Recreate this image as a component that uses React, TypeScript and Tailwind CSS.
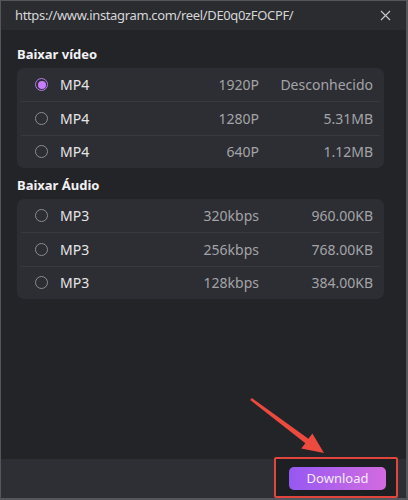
const video = [
  { fmt: "MP4", q: "1920P", size: "Desconhecido", on: true },
  { fmt: "MP4", q: "1280P", size: "5.31MB" },
  { fmt: "MP4", q: "640P", size: "1.12MB" },
];

const audio = [
  { fmt: "MP3", q: "320kbps", size: "960.00KB" },
  { fmt: "MP3", q: "256kbps", size: "768.00KB" },
  { fmt: "MP3", q: "128kbps", size: "384.00KB" },
];

type Opt = { fmt: string; q: string; size: string; on?: boolean };

export default function App() {
  return (
    <div
      className="relative h-[500px] w-[408px] overflow-hidden border-t border-l border-b-2 border-r-2 border-[#55565b] bg-[#232428] text-[14px]"
      style={{ fontFamily: '"Noto Sans", "Open Sans", sans-serif' }}
    >
      <div className="flex h-[29px] items-center justify-between bg-[#2b2c30] pl-[14px] pr-[15px]">
        <span className="text-[13px] tracking-[-0.35px] text-[#d6d6d8]">
          https://www.instagram.com/reel/DE0q0zFOCPF/
        </span>
        <svg width="11" height="11" viewBox="0 0 11 11" className="text-[#c4c4c8]">
          <path d="M1 1 L10 10 M10 1 L1 10" stroke="currentColor" strokeWidth="1.2" />
        </svg>
      </div>

      <div className="flex h-[429px] flex-col pl-[16px] pr-[22px]">
        <Section title="Baixar vídeo" rows={video} gap="mt-[14px]" />
        <Section title="Baixar Áudio" rows={audio} gap="mt-[7px]" />
      </div>

      <div className="relative flex h-[39px] items-center justify-end bg-[#2e2f34] pr-[20px]">
        <div className="absolute left-[273px] top-[-2px] h-[41px] w-[124px] rounded-[2px] border-2 border-[#e2453d] bg-[#1e1f23]" />
        <button className="relative z-10 h-[23px] w-[97px] rounded-[5px] bg-gradient-to-r from-[#9658f2] to-[#d36ae0] text-[13px] text-[#f4ecff]">
          Download
        </button>
      </div>

      <svg className="absolute left-0 top-0" width="408" height="500" viewBox="0 0 408 500">
        <polygon
          points="250.8,397 307.4,437.8 311.4,432.4 323,452 300.2,447.4 304.4,442.2 249.2,399"
          fill="#ec4a3e"
        />
      </svg>
    </div>
  );
}

function Section({ title, rows, gap }: { title: string; rows: Opt[]; gap: string }) {
  return (
    <div className={gap}>
      <div className="mb-[4px] text-[13px] font-bold leading-[20px] text-[#f2f2f4]">{title}</div>
      <div className="rounded-[7px] bg-[#2d2e33]">
        {rows.map((r, i) => (
          <div
            key={r.q}
            className={`mx-[4px] flex items-center pl-[14px] pr-[7px] ${
              i > 0 ? "h-[33.5px] border-t border-[#383940]" : "h-[33px]"
            }`}
          >
            <Radio on={r.on} />
            <span className="ml-[12px] flex-1 text-[#e6e6e8]">{r.fmt}</span>
            <span className="text-[#a4a4a8]">{r.q}</span>
            <span className="w-[114px] text-right text-[#a4a4a8]">{r.size}</span>
          </div>
        ))}
      </div>
    </div>
  );
}

function Radio({ on }: { on?: boolean }) {
  return on ? (
    <span className="flex h-[13px] w-[13px] items-center justify-center rounded-full border-[1.5px] border-[#b67de8]">
      <span className="h-[8px] w-[8px] rounded-full bg-[#c77dff]" />
    </span>
  ) : (
    <span className="h-[13px] w-[13px] rounded-full border-[1.5px] border-[#8c8c90]" />
  );
}
